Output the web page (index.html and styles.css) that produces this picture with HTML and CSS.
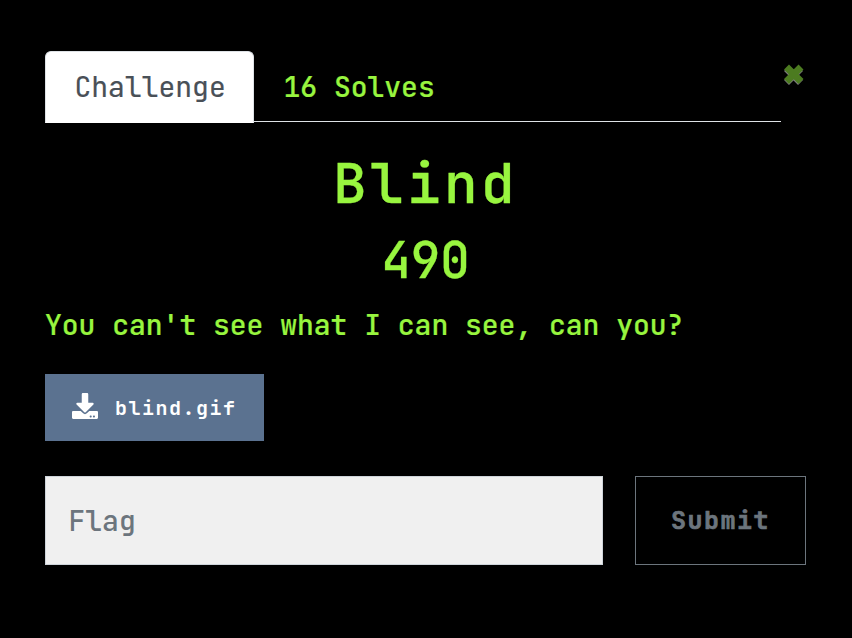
FILE: index.html
```html
<!DOCTYPE html>
<html lang="en">
<head>
<meta charset="utf-8">
<title>Blind</title>
<link rel="stylesheet" href="styles.css">
</head>
<body>
<main class="modal">
  <header class="top">
    <nav class="tabs">
      <a class="tab active">Challenge</a>
      <a class="tab">16 Solves</a>
    </nav>
    <button class="close" aria-label="Close">
      <svg width="23" height="23" viewBox="0 0 23 23">
        <path class="shadow" d="M4.500 5.500 L18.500 19.500 M18.500 5.500 L4.500 19.500"/>
        <path class="cross" d="M4.500 4 L19 18.500 M19 4 L4.500 18.500"/>
      </svg>
    </button>
  </header>
  <h2 class="name">Blind</h2>
  <h3 class="value">490</h3>
  <p class="desc">You can't see what I can see, can you?</p>
  <a class="file">
    <svg width="26" height="26" viewBox="0 0 512 512" fill="#fff">
      <path d="M216 0h80c13.300 0 24 10.700 24 24v168h87.700c17.800 0 26.700 21.500 14.100 34.100L269.700 378.300c-7.500 7.500-19.800 7.500-27.300 0L90.100 226.100c-12.600-12.600-3.700-34.100 14.100-34.100H192V24c0-13.300 10.700-24 24-24zm296 376v112c0 13.300-10.700 24-24 24H24c-13.300 0-24-10.700-24-24V376c0-13.300 10.700-24 24-24h146.700l49 49c20.100 20.100 52.500 20.100 72.600 0l49-49H488c13.300 0 24 10.700 24 24zm-124 88c0-11-9-20-20-20s-20 9-20 20 9 20 20 20 20-9 20-20zm64 0c0-11-9-20-20-20s-20 9-20 20 9 20 20 20 20-9 20-20z"/>
    </svg>
    <span>blind.gif</span>
  </a>
  <div class="answer">
    <input class="flag" type="text" placeholder="Flag">
    <button class="submit">Submit</button>
  </div>
</main>
</body>
</html>
```
FILE: styles.css
```css
* { box-sizing: border-box; }
body {
  margin: 0;
  background: #000;
  color: #98f53f;
  font: 500 28px/42px "JetBrains Mono", "DejaVu Sans Mono", monospace;
}
.modal { padding: 51px 46px 0 45px; }
.top { display: flex; height: 72px; }
.tabs {
  display: flex;
  width: 736px;
  height: 71px;
  border-bottom: 1px solid #dee2e6;
}
.tab {
  height: 72px;
  padding: 14px 28.5px;
  border: 1px solid transparent;
  -webkit-text-stroke: 0.2px;
  white-space: nowrap;
}
.active {
  width: 209px;
  background: #fff;
  border-color: #dee2e6 #dee2e6 #fff;
  border-radius: 6px 6px 0 0;
  color: #495057;
  font-weight: 400;
}
.close {
  margin: 12px 0 0 1px;
  padding: 0;
  width: 23px;
  height: 23px;
  flex: none;
  border: 0;
  background: none;
}
.close svg { display: block; }
.close path { fill: none; stroke-width: 7; }
.shadow { stroke: #7f7f7f; }
.cross { stroke: #4c7b20; }
h2, h3, p { margin: 0; font-weight: 500; }
.name {
  margin-top: 27px;
  text-align: center;
  font-size: 56px;
  line-height: 67px;
  letter-spacing: 3.4px;
  -webkit-text-stroke: 0.3px;
}
.value {
  margin-top: 15px;
  text-align: center;
  font-size: 49px;
  line-height: 58px;
  -webkit-text-stroke: 0.3px;
}
.desc { margin-top: 14px; -webkit-text-stroke: 0.2px; }
.file {
  display: flex;
  align-items: center;
  width: 219px;
  height: 67px;
  margin-top: 28px;
  padding-left: 27px;
  background: #5b7290;
  color: #fff;
  font-size: 20px;
  font-weight: 700;
  letter-spacing: 1.5px;
}
.file svg { margin: 0 17px 3px 0; }
.answer { display: flex; gap: 32px; margin-top: 35px; }
.flag {
  width: 558px;
  height: 89px;
  padding: 0 22.5px;
  border: 1px solid #ced4da;
  border-radius: 0;
  background: #f0f0f0;
  font: inherit;
}
.flag::placeholder { color: #6c757d; opacity: 1; }
.submit {
  width: 171px;
  height: 89px;
  flex: none;
  padding: 0 0 2px;
  border: 1px solid #6c757d;
  background: #000;
  color: #6c757d;
  font: inherit;
  font-size: 25px;
  font-weight: 700;
  letter-spacing: 1.5px;
  -webkit-text-stroke: 0.7px;
}
```
